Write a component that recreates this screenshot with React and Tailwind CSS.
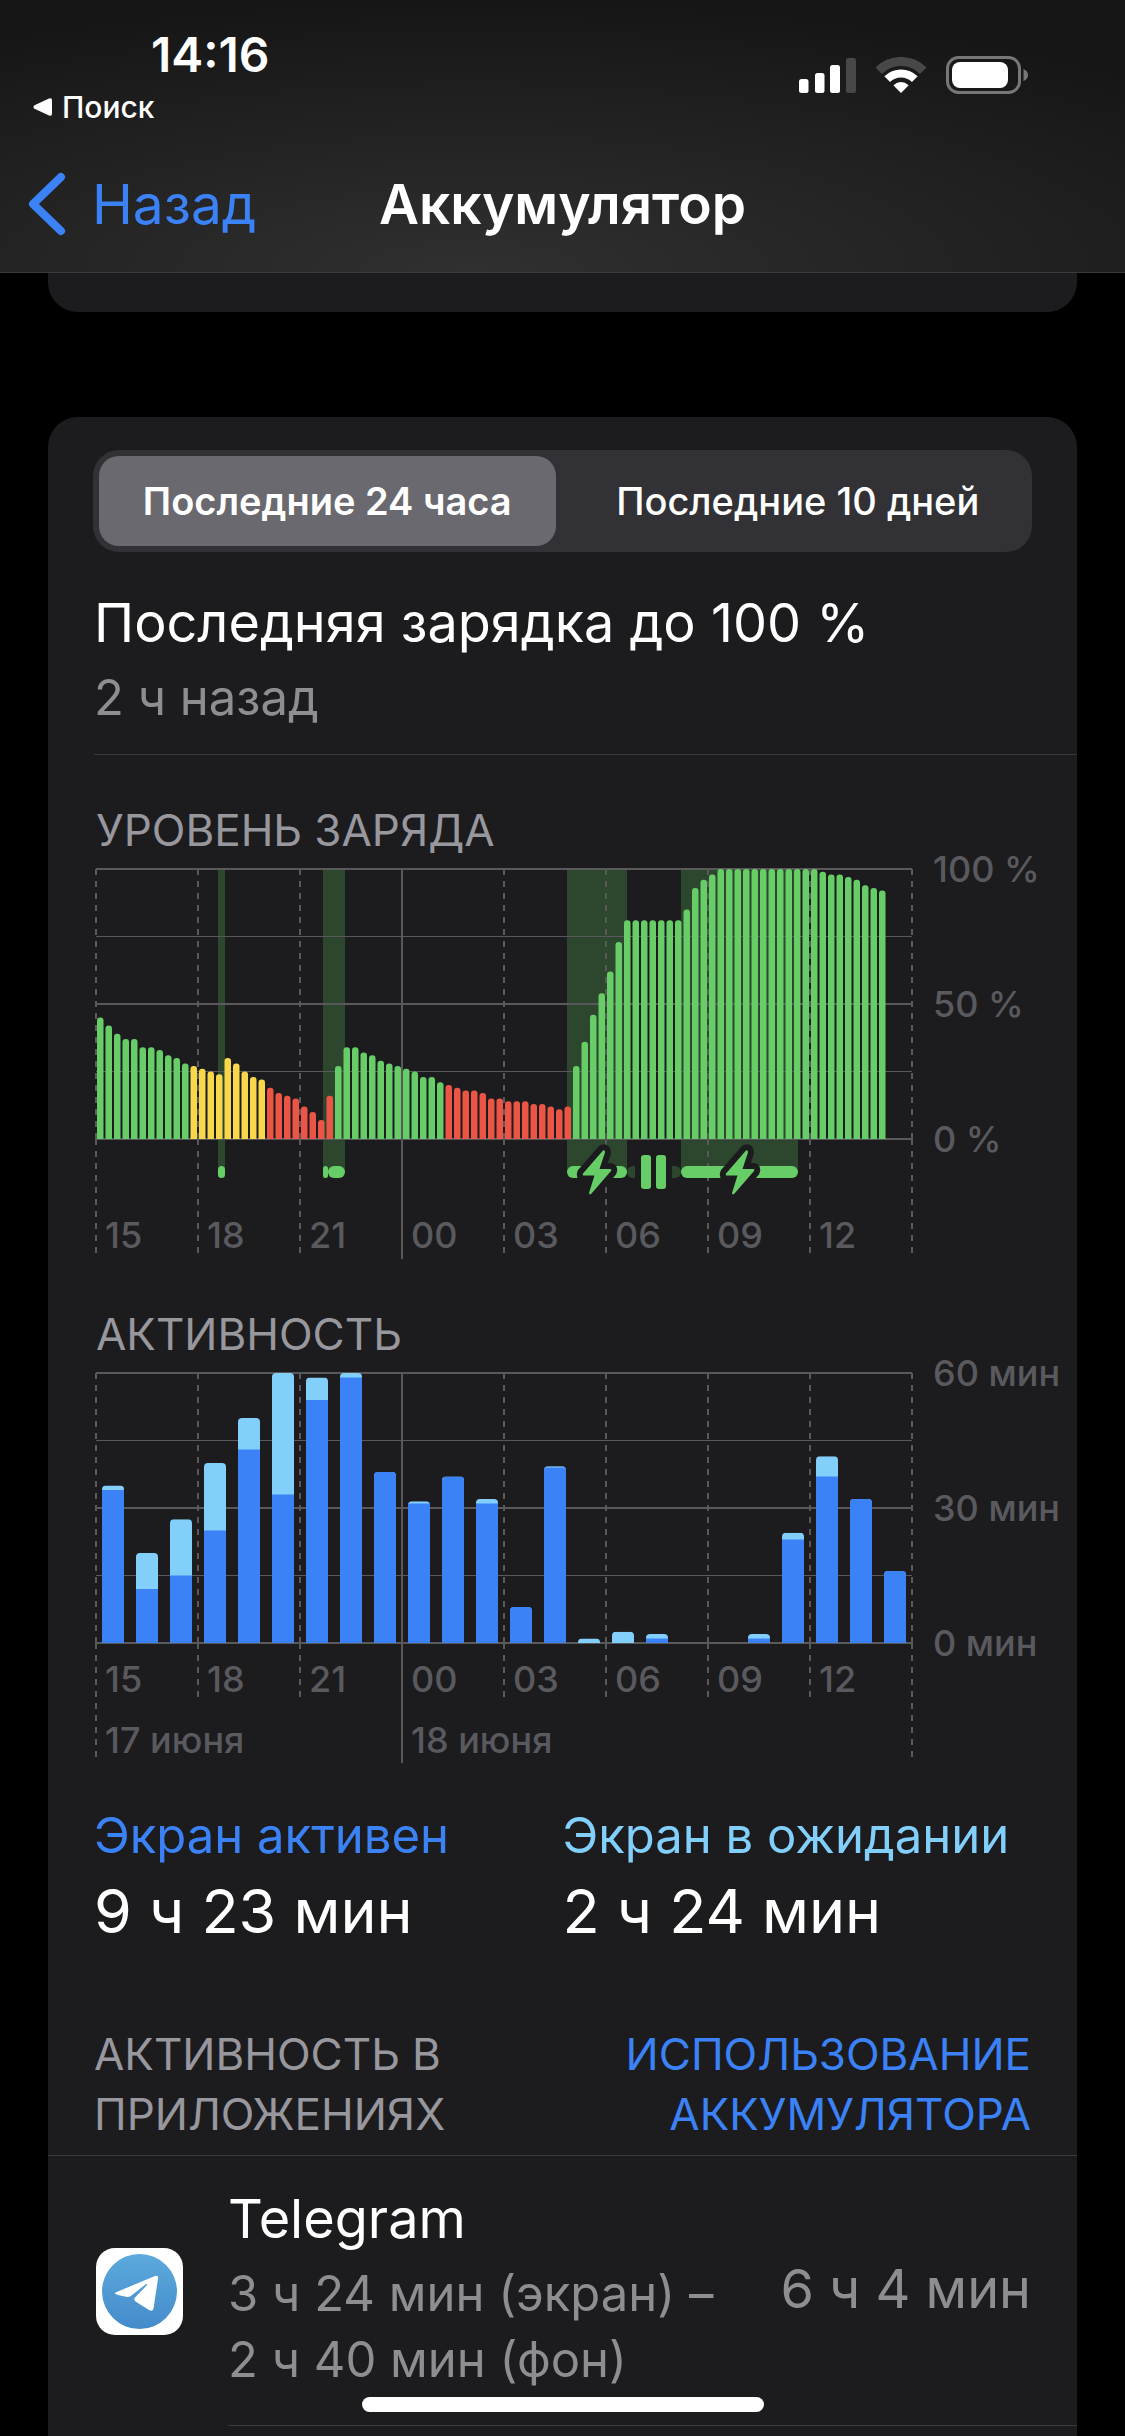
import React, { useState } from "react";

const GREEN = "#67ce67";
const YELLOW = "#f9d74a";
const RED = "#eb5545";
const ACTIVE = "#3b82f6";
const IDLE = "#82cffc";
const CARD = "#1c1c1e";
const GRID = "#59595c";
const AXIS_TEXT = "#5a5a5e";

// Plot area inside the chart drawing, in drawing units
const LEFT = 2;
const TOP = 9;
const HEIGHT = 270;
const HOUR = 34;
const RIGHT = LEFT + HOUR * 24;
const BOTTOM = TOP + HEIGHT;

const hours = ["15", "18", "21", "00", "03", "06", "09", "12"];

// One entry per stretch of bars in the same colour, a bar every 15 minutes
const levels = [
  { color: GREEN, values: [45, 42, 39, 37, 37, 34, 34, 33, 31, 30, 28] },
  { color: YELLOW, values: [27, 26, 25, 24, 30, 28, 25, 23, 22] },
  { color: RED, values: [19, 17, 16, 15, 12, 10, 7, 16] },
  { color: GREEN, values: [27, 34, 34, 32, 31, 29, 28, 27, 26, 25, 23, 23, 21] },
  { color: RED, values: [20, 19, 18, 18, 17, 15, 15, 14, 14, 14, 13, 13, 12, 11, 12] },
  {
    color: GREEN,
    values: [
      27, 36, 46, 54, 62, 73, 81, 81, 81, 81, 81, 81, 81, 85, 93, 96, 98,
      100, 100, 100, 100, 100, 100, 100, 100, 100, 100, 100, 100,
      99, 98, 98, 97, 96, 94, 93, 92,
    ],
  },
];

const levelBars = levels.flatMap(({ color, values }) =>
  values.map((value) => ({ color, value }))
);

const charging = [
  { from: 124, to: 131 },
  { from: 229, to: 234 },
  { from: 234, to: 251 },
  { from: 473, to: 533 },
  { from: 587, to: 704 },
];

// Minutes per hour: [screen on, screen off]
const activity = [
  [34, 1], [12, 8], [15, 12.5], [25, 15], [43, 7], [33, 27],
  [54, 5], [59, 1], [38, 0], [31, 0.5], [37, 0], [31, 1],
  [8, 0], [39, 0.3], [0, 1], [0, 2.5], [1, 1], [0, 0],
  [0, 0], [1, 1], [23, 1.5], [37, 4.5], [32, 0], [16, 0],
];

const roundTop = (x, y, w, r) =>
  `M${x} ${BOTTOM}V${y + r}Q${x} ${y} ${x + r} ${y}H${x + w - r}Q${x + w} ${y} ${x + w} ${y + r}V${BOTTOM}Z`;

const Grid = ({ labels, labelY, tickEnd, edgeEnd, midnightEnd }) => (
  <g>
    {[0, 1, 2, 3, 4].map((i) => (
      <line
        key={i}
        x1={LEFT}
        x2={RIGHT}
        y1={TOP + (HEIGHT / 4) * i}
        y2={TOP + (HEIGHT / 4) * i}
        stroke={GRID}
        strokeWidth={i % 2 ? 1 : 2}
      />
    ))}
    {[...hours, "15"].map((hour, i) => {
      const x = LEFT + HOUR * 3 * i;
      const midnight = hour === "00";
      const edge = i === 0 || i === hours.length;
      const end = midnight ? midnightEnd : edge ? edgeEnd : tickEnd;
      return (
        <path
          key={i}
          d={`M${x} ${TOP}V${BOTTOM}M${x} ${BOTTOM}V${end}`}
          stroke={GRID}
          strokeWidth="2"
          strokeDasharray={midnight ? undefined : "6 6"}
        />
      );
    })}
    {hours.map((hour, i) => (
      <text key={hour} x={LEFT + HOUR * 3 * i + 9} y={labelY} fill={AXIS_TEXT}>
        {hour}
      </text>
    ))}
    {labels.map((label, i) => (
      <text key={label} x="839" y={TOP + (HEIGHT / 2) * i + 13} fill={AXIS_TEXT}>
        {label}
      </text>
    ))}
  </g>
);

const Bolt = ({ x }) => (
  <path
    transform={`translate(${x} 290)`}
    d="M21 0.5L1 23.5Q0 25.5 2 25.5H12.5L7 43Q7.500 45.500 9.500 43.500L29 21Q30 19 28 19H17.500L23 2.500Q23 -0.500 21 0.500Z"
    fill={GREEN}
    stroke={CARD}
    strokeWidth="12"
    strokeLinejoin="round"
    paintOrder="stroke"
  />
);

const LevelChart = () => (
  <svg
    viewBox="0 0 983 400"
    className="block w-full overflow-visible text-[36px] font-medium"
    role="img"
    aria-label="Уровень заряда"
  >
    {charging.map(({ from, to }) => (
      <rect key={from} x={from} y={TOP} width={to - from} height="303" fill="#2c472e" />
    ))}
    <Grid
      labels={["100 %", "50 %", "0 %"]}
      labelY={388}
      tickEnd={393}
      edgeEnd={393}
      midnightEnd={399}
    />
    {levelBars.map(({ color, value }, i) => (
      <path
        key={i}
        d={roundTop(LEFT + 1 + i * 8.5, BOTTOM - (value * HEIGHT) / 100, 6.5, 3)}
        fill={color}
      />
    ))}
    {charging.map(({ from, to }) => (
      <rect
        key={from}
        x={from}
        y="306"
        width={to - from}
        height="12"
        rx={Math.min(6, (to - from) / 2)}
        fill={GREEN}
      />
    ))}
    <rect x="533" y="306" width="54" height="12" rx="6" fill="#2c472e" />
    <rect x="541" y="300" width="37" height="24" fill={CARD} />
    <rect x="547" y="295" width="10" height="34" rx="3" fill={GREEN} />
    <rect x="562" y="295" width="10" height="34" rx="3" fill={GREEN} />
    <Bolt x={488} />
    <Bolt x={631} />
  </svg>
);

const ActivityChart = () => (
  <svg
    viewBox="0 0 983 400"
    className="block w-full overflow-visible text-[36px] font-medium"
    role="img"
    aria-label="Активность"
  >
    <Grid
      labels={["60 мин", "30 мин", "0 мин"]}
      labelY={328}
      tickEnd={333}
      edgeEnd={393}
      midnightEnd={399}
    />
    {activity.map(([on, off], i) => {
      const x = LEFT + 6 + i * HOUR;
      const total = (on + off) * 4.5;
      if (!total) return null;
      return (
        <g key={i}>
          <clipPath id={`bar-${i}`}>
            <path d={roundTop(x, BOTTOM - total, 22, 4)} />
          </clipPath>
          <g clipPath={`url(#bar-${i})`}>
            <rect x={x} y={BOTTOM - total} width="22" height={total} fill={IDLE} />
            <rect x={x} y={BOTTOM - on * 4.5} width="22" height={on * 4.5} fill={ACTIVE} />
          </g>
        </g>
      );
    })}
    <text x={LEFT + 9} y="389" fill={AXIS_TEXT}>17 июня</text>
    <text x={LEFT + HOUR * 9 + 9} y="389" fill={AXIS_TEXT}>18 июня</text>
  </svg>
);

const StatusIcons = () => (
  <div className="flex items-center gap-5">
    <svg width="57" height="35" viewBox="0 0 57 35" fill="#fff" aria-label="Сигнал сети">
      <rect x="0" y="21" width="9.500" height="14" rx="2.500" />
      <rect x="16" y="15" width="9.500" height="20" rx="2.500" />
      <rect x="31" y="7" width="10" height="28" rx="2.500" />
      <rect x="47" y="0" width="10" height="35" rx="2.500" fill="#484848" />
    </svg>
    <svg width="50" height="36" viewBox="0 0 50 36" fill="none" aria-label="Wi-Fi">
      <path d="M2.700 13.700A31.500 31.500 0 0 1 47.300 13.700" stroke="#484848" strokeWidth="9" />
      <path d="M11.200 22.200A19.500 19.500 0 0 1 38.800 22.200" stroke="#fff" strokeWidth="8" />
      <path d="M25 36L17.300 28.300Q25 21.500 32.700 28.300Z" fill="#fff" />
    </svg>
    <svg width="82" height="38" viewBox="0 0 82 38" aria-label="Заряд">
      <rect x="1.500" y="1.500" width="72" height="35" rx="11" fill="none" stroke="#777" strokeWidth="3" />
      <rect x="6" y="6" width="56" height="26" rx="8" fill="#fff" />
      <path d="M77.500 13Q82 15 82 19T77.500 25Z" fill="#777" />
    </svg>
  </div>
);

const TelegramIcon = () => (
  <svg width="87" height="87" viewBox="0 0 87 87" className="shrink-0" aria-hidden="true">
    <defs>
      <linearGradient id="telegram" x1="0" y1="0" x2="0" y2="1">
        <stop offset="0" stopColor="#5caadd" />
        <stop offset="1" stopColor="#448bcb" />
      </linearGradient>
    </defs>
    <rect width="87" height="87" rx="19" fill="#fff" />
    <circle cx="43.500" cy="43.500" r="37.500" fill="url(#telegram)" />
    <path
      d="M19.500 44.500L59 28Q62.500 27 62 31L57.500 60.500Q56.500 64 53 62L39.500 53.500Q37 51.500 39 49.500L51 37Q52 35 49.500 36.500L35.500 47.500Q33.500 49 31 49L22 47Q17.500 45.500 19.500 44.500Z"
      fill="#fff"
    />
  </svg>
);

const Header = () => (
  <header className="border-b border-[#3a3a3c] bg-[radial-gradient(ellipse_85%_100%_at_42%_100%,#303030,#161616)]">
    <div className="flex h-[136px] items-center justify-between pt-[14px] pr-[97px] pl-[33px]">
      <div className="flex flex-col gap-1">
        <time className="pl-[118px] text-[48px] leading-[60px] font-semibold">14:16</time>
        <button className="flex items-center gap-[10px] text-[30px] leading-[36px] font-medium">
          <svg width="19" height="18" viewBox="0 0 19 18" aria-hidden="true">
            <path d="M1 7.500Q0 9 1 10.500L16 17.500Q19 18.500 19 16V2Q19 -0.500 16 0.500Z" fill="#fff" />
          </svg>
          Поиск
        </button>
      </div>
      <StatusIcons />
    </div>
    <nav className="grid h-[136px] grid-cols-[1fr_auto_1fr] items-center text-[55px]">
      <button className="flex items-center gap-[26px] justify-self-start pl-7 text-[#3b82f6]">
        <svg width="38" height="64" viewBox="0 0 38 64" fill="none" aria-hidden="true">
          <path d="M33 5L5 32L33 59" stroke="currentColor" strokeWidth="8" strokeLinecap="round" strokeLinejoin="round" />
        </svg>
        Назад
      </button>
      <h1 className="font-semibold">Аккумулятор</h1>
    </nav>
  </header>
);

const App = () => {
  const [range, setRange] = useState("24h");

  const tabs = [
    { id: "24h", label: "Последние 24 часа" },
    { id: "10d", label: "Последние 10 дней" },
  ];

  return (
    <div className="flex min-h-screen flex-col bg-black font-['Inter',sans-serif] text-white">
      <Header />

      <main className="flex grow flex-col px-12">
        {/* End of the previous card */}
        <div className="h-[39px] rounded-b-[30px] bg-[#1c1c1e]" />

        <section className="mt-[105px] grow rounded-t-[30px] bg-[#1c1c1e] pt-[33px]">
          <div
            role="tablist"
            className="mx-[45px] grid grid-cols-2 gap-[14px] rounded-[26px] bg-[#323135] p-[6px]"
          >
            {tabs.map(({ id, label }) => (
              <button
                key={id}
                role="tab"
                aria-selected={range === id}
                onClick={() => setRange(id)}
                className={`h-[90px] rounded-[20px] text-[38px] whitespace-nowrap ${
                  range === id ? "bg-[#6a696f] font-semibold" : "font-medium"
                }`}
              >
                {label}
              </button>
            ))}
          </div>

          <div className="ml-[46px] border-b border-[#3a3a3c] pt-[35px] pb-[23px]">
            <h2 className="text-[54px] leading-[72px]">Последняя зарядка до 100 %</h2>
            <p className="mt-[6px] text-[49px] leading-[66px] text-[#8d8d92]">2 ч назад</p>
          </div>

          <div className="ml-[46px]">
            <h3 className="mt-[45px] pl-[2px] text-[44px] leading-[60px] text-[#98979e]">УРОВЕНЬ ЗАРЯДА</h3>
            <LevelChart />
            <h3 className="mt-[44px] pl-[2px] text-[44px] leading-[60px] text-[#98979e]">АКТИВНОСТЬ</h3>
            <ActivityChart />
          </div>

          <dl className="mx-[46px] mt-[39px] grid grid-cols-2">
            <div>
              <dt className="text-[49px] leading-[66px] text-[#3b82f6]">Экран активен</dt>
              <dd className="text-[61px] leading-[84px]">9 ч 23 мин</dd>
            </div>
            <div>
              <dt className="text-[49px] leading-[66px] whitespace-nowrap text-[#82cffc]">Экран в ожидании</dt>
              <dd className="text-[61px] leading-[84px]">2 ч 24 мин</dd>
            </div>
          </dl>

          <div className="mt-[71px] flex justify-between border-b border-[#3a3a3c] px-[46px] pb-[11px] text-[44px] leading-[60px]">
            <h3 className="text-[#98979e]">
              АКТИВНОСТЬ В<br />ПРИЛОЖЕНИЯХ
            </h3>
            <button className="text-right text-[#3b82f6]">
              ИСПОЛЬЗОВАНИЕ<br />АККУМУЛЯТОРА
            </button>
          </div>

          <ul>
            <li className="flex items-center pl-[48px]">
              <TelegramIcon />
              <div className="ml-[45px] flex grow items-center justify-between border-b border-[#3a3a3c] pt-[27px] pr-[46px] pb-[32px]">
                <div>
                  <h4 className="text-[54px] leading-[72px]">Telegram</h4>
                  <p className="mt-[6px] text-[49px] leading-[66px] text-[#8d8d92]">
                    3 ч 24 мин (экран) –<br />2 ч 40 мин (фон)
                  </p>
                </div>
                <span className="text-[54px] text-[#8d8d92]">6 ч 4 мин</span>
              </div>
            </li>
          </ul>
        </section>
      </main>

      {/* Home indicator */}
      <div className="fixed bottom-6 left-1/2 h-[15px] w-[402px] -translate-x-1/2 rounded-full bg-white" />
    </div>
  );
};

export default App;
